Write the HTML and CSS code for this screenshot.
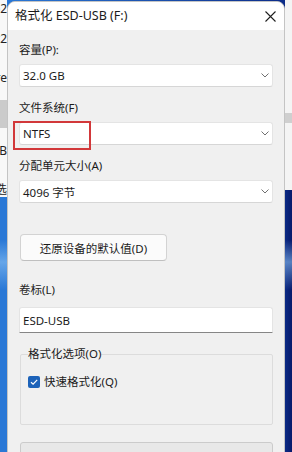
FILE: index.html
```html
<!DOCTYPE html>
<html lang="zh-CN">
<head>
  <meta charset="UTF-8" />
  <meta name="viewport" content="width=device-width, initial-scale=1.0"/>
  <title>格式化 ESD-USB (F:)</title>
  <link rel="stylesheet" href="styles.css">
</head>
<body>
  <div class="screen">
    <div class="edge edge-left">
      <div class="pane">
        <div class="frag f1"><span>o2</span></div>
        <div class="frag f2"><span>t2</span></div>
        <div class="frag f3"><span>re</span></div>
        <div class="band"></div>
        <div class="frag f4"><span>B</span></div>
        <div class="frag f5"><span>选</span></div>
      </div>
    </div>

    <div class="dialog">
      <div class="titlebar">
        <span class="title">格式化 ESD-USB (F:)</span>
        <svg class="close" width="11" height="11" viewBox="0 0 11 11">
          <path d="M0.5 0.5L10.5 10.5M10.5 0.5L0.5 10.5" stroke="#1f1f1f" stroke-width="1.1" fill="none"/>
        </svg>
      </div>

      <div class="content">
        <div class="label first">容量(P):</div>
        <div class="combo">
          <span>32.0 GB</span>
          <svg class="chevron" width="8" height="5" viewBox="0 0 8 5"><path d="M0.5 0.5L4 4L7.5 0.5" stroke="#707070" fill="none"/></svg>
        </div>

        <div class="label">文件系统(F)</div>
        <div class="combo">
          <span>NTFS</span>
          <svg class="chevron" width="8" height="5" viewBox="0 0 8 5"><path d="M0.5 0.5L4 4L7.5 0.5" stroke="#707070" fill="none"/></svg>
          <div class="mark"></div>
        </div>

        <div class="label">分配单元大小(A)</div>
        <div class="combo">
          <span>4096 字节</span>
          <svg class="chevron" width="8" height="5" viewBox="0 0 8 5"><path d="M0.5 0.5L4 4L7.5 0.5" stroke="#707070" fill="none"/></svg>
        </div>

        <button class="btn-default">还原设备的默认值(D)</button>

        <div class="label label-volume">卷标(L)</div>
        <div class="textbox">ESD-USB</div>

        <fieldset class="group">
          <legend>格式化选项(O)</legend>
          <label class="check">
            <span class="box">
              <svg width="10" height="10" viewBox="0 0 10 10"><path d="M2 5.2L4.1 7.2L8.2 2.8" stroke="#fff" stroke-width="1.2" fill="none"/></svg>
            </span>
            快速格式化(Q)
          </label>
        </fieldset>

        <div class="start-btn"></div>
      </div>
    </div>

    <div class="edge edge-right">
      <div class="pane">
        <div class="band"></div>
      </div>
    </div>
  </div>
</body>
</html>
```

FILE: styles.css
```css
/* desktop wallpaper behind everything */
html {
  background-color: #1552c4;
  background-image:
    linear-gradient(to bottom, rgba(140, 195, 245, 0) 240px, rgba(140, 195, 245, 0.6) 262px, rgba(140, 195, 245, 0) 290px),
    linear-gradient(to right, #2a78d6 0, #2a78d6 8px, #0c2d8a 284px, #07196a 292px);
  background-repeat: no-repeat;
  background-size: 292px 452px;
}

html, body {
  margin: 0;
}

body {
  font-family: "Noto Sans", "Noto Sans CJK SC", sans-serif;
  color: #1b1b1b;
  overflow: hidden;
}

.screen {
  display: flex;
  align-items: flex-start;
  width: 292px;
  height: 452px;
  overflow: hidden;
}

/* background windows peeking out at the sides */
.edge {
  width: 7px;
  flex-shrink: 0;
  overflow: hidden;
}

.edge-left .pane {
  height: 197px;
  overflow: hidden;
  background: #f8f8f8;
}

.edge-left .band {
  height: 28px;
  margin-top: 14px;
  background: #cbcbcb;
}

.edge-right .pane {
  height: 190px;
  overflow: hidden;
  background: #f4f4f4;
}

.edge-right .band {
  height: 10px;
  margin-top: 113px;
  background: #cfcfcf;
}

.frag {
  display: flex;
  justify-content: flex-end;
  overflow: hidden;
  white-space: nowrap;
  font-size: 12px;
  line-height: 16px;
  height: 16px;
  color: #222;
}

.f1 { margin-top: 1px; }
.f2 { margin-top: 14px; }
.f3 { margin-top: 23px; }
.f4 { margin-top: 15px; }
.f5 { margin-top: 23px; }

/* dialog */
.dialog {
  width: 278px;
  height: 460px;
  flex-shrink: 0;
  margin-top: 1px;
  box-sizing: border-box;
  border: 1px solid #c4c4c4;
  border-radius: 8px 8px 0 0;
  background-color: #f0f0f0;
  overflow: hidden;
}

.titlebar {
  display: flex;
  align-items: center;
  justify-content: space-between;
  height: 28px;
  padding: 0 8px 0 7px;
  background-color: #ffffff;
}

.title {
  font-size: 12.5px;
  line-height: 16px;
}

.close {
  display: block;
}

.content {
  padding: 12px 11px 0 11px;
}

.label {
  font-size: 11.5px;
  line-height: 16px;
  height: 16px;
  margin-top: 13px;
}

.label.first {
  margin-top: 0;
}

.combo {
  position: relative;
  display: flex;
  align-items: center;
  justify-content: space-between;
  height: 23px;
  margin-top: 6px;
  padding: 0 3px 0 3px;
  box-sizing: border-box;
  background-color: #ffffff;
  border: 1px solid #e4e4e4;
  border-bottom-color: #d6d6d6;
  border-radius: 3px;
  font-size: 11.5px;
}

.chevron {
  display: block;
}

.mark {
  position: absolute;
  left: -7px;
  top: -2px;
  width: 78px;
  height: 29px;
  box-sizing: border-box;
  border: 2px solid #d2383a;
}

.btn-default {
  display: block;
  width: 147px;
  height: 27px;
  margin: 31px 0 0 1px;
  padding: 0;
  font-family: inherit;
  font-size: 11.5px;
  color: #1b1b1b;
  background-color: #fbfbfb;
  border: 1px solid #d3d3d3;
  border-bottom-color: #bfbfbf;
  border-radius: 4px;
}

.label-volume {
  margin-top: 21px;
}

.textbox {
  height: 26px;
  margin-top: 9px;
  padding-left: 3px;
  box-sizing: border-box;
  display: flex;
  align-items: center;
  font-size: 11.5px;
  background-color: #ffffff;
  border: 1px solid #e4e4e4;
  border-bottom: 1px solid #868686;
  border-radius: 3px 3px 0 0;
}

.group {
  margin: 14px 0 0 1px;
  padding: 14px 7px 35px 7px;
  border: 1px solid #dcdcdc;
  border-radius: 2px;
}

.group legend {
  padding: 0;
  font-size: 11.5px;
  line-height: 14px;
}

.check {
  display: flex;
  align-items: center;
  gap: 4px;
  font-size: 11.5px;
  line-height: 14px;
}

.box {
  display: flex;
  align-items: center;
  justify-content: center;
  width: 12px;
  height: 12px;
  background-color: #1c62b9;
  border-radius: 2px;
}

.box svg {
  display: block;
}

.start-btn {
  height: 30px;
  margin: 17px 0 0 1px;
  background-color: #e8e8e8;
  border: 1px solid #cbcbcb;
  border-radius: 3px;
}
```
